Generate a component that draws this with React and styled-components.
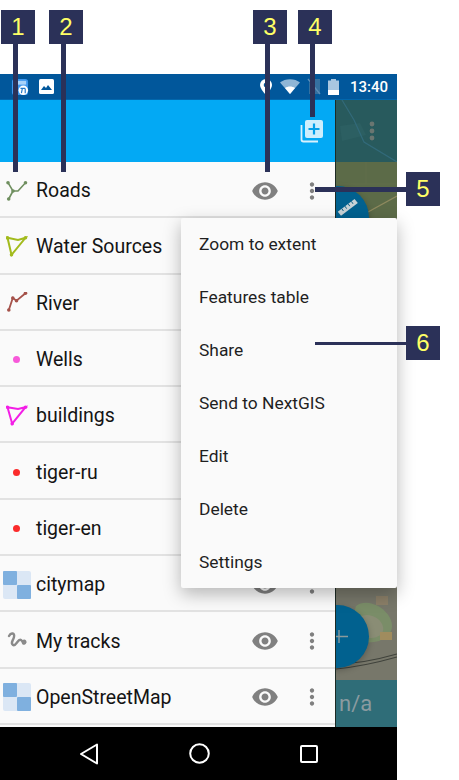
import React from 'react'
import styled, { createGlobalStyle } from 'styled-components'
import { MdVisibility, MdMoreVert } from 'react-icons/md'

const GlobalStyle = createGlobalStyle`
  html, body { margin: 0; padding: 0; background: #fff; }
  body { font-family: Roboto, "Liberation Sans", sans-serif; }
`

const layers = [
  { name: 'Roads', icon: 'roads' },
  { name: 'Water Sources', icon: 'water' },
  { name: 'River', icon: 'river' },
  { name: 'Wells', icon: 'wells' },
  { name: 'buildings', icon: 'buildings' },
  { name: 'tiger-ru', icon: 'tiger' },
  { name: 'tiger-en', icon: 'tiger' },
  { name: 'citymap', icon: 'raster' },
  { name: 'My tracks', icon: 'tracks' },
  { name: 'OpenStreetMap', icon: 'raster' },
]

const menuItems = ['Zoom to extent', 'Features table', 'Share', 'Send to NextGIS', 'Edit', 'Delete', 'Settings']

const callouts = [
  { n: 1, x: 1, y: 10 },
  { n: 2, x: 49, y: 10 },
  { n: 3, x: 253, y: 10 },
  { n: 4, x: 298, y: 10 },
  { n: 5, x: 406, y: 172 },
  { n: 6, x: 406, y: 326 },
]

const leaders = [
  { x: 13, y: 44, w: 5, h: 128 },
  { x: 61, y: 44, w: 5, h: 128 },
  { x: 265, y: 44, w: 5, h: 128 },
  { x: 310, y: 44, w: 5, h: 73 },
  { x: 315, y: 187, w: 91, h: 5 },
  { x: 315, y: 342, w: 91, h: 3 },
]

function Polyline({ points, color, width = 1.6, r = 1.8, close, nodes }) {
  const pts = points.map(p => p.join(',')).join(' ')
  const dots = nodes || points
  return (
    <svg width="22" height="22" viewBox="0 0 22 22">
      {close
        ? <polygon points={pts} fill="none" stroke={color} strokeWidth={width} />
        : <polyline points={pts} fill="none" stroke={color} strokeWidth={width} />}
      {dots.map((p, i) => <circle key={i} cx={p[0]} cy={p[1]} r={r} fill={color} />)}
    </svg>
  )
}

function RasterIcon() {
  return (
    <svg width="28" height="28" viewBox="0 0 28 28">
      <rect width="28" height="28" rx="2" fill="#dbe7f5" />
      <rect x="0" y="0" width="14" height="14" rx="1" fill="#7fb0df" />
      <rect x="14" y="14" width="14" height="14" rx="1" fill="#7fb0df" />
    </svg>
  )
}

function LayerIcon({ kind }) {
  if (kind === 'roads') {
    return (
      <Polyline
        color="#6f8f5f"
        points={[[2, 2.7], [7, 11], [2.7, 19], [7, 11], [12, 11], [19.5, 2.7]]}
        nodes={[[2, 2.7], [7, 11], [2.7, 19], [19.5, 2.7]]}
      />
    )
  }
  if (kind === 'water') {
    return <Polyline color="#a3bb1d" close width={2} points={[[1.5, 1.8], [12, 4], [19.5, 1.8], [5.5, 18.8]]} nodes={[[1.5, 1.8], [19.5, 1.8], [5.5, 18.8]]} />
  }
  if (kind === 'river') {
    return <Polyline color="#a5524a" width={1.8} points={[[2.8, 18], [6.8, 6], [10.5, 8.7], [19.5, 1.3]]} />
  }
  if (kind === 'buildings') {
    return <Polyline color="#f31ee6" close width={2} points={[[1.5, 2.2], [12, 4], [19.5, 2.2], [6.2, 18.7]]} nodes={[[1.5, 2.2], [19.5, 2.2], [6.2, 18.7]]} />
  }
  if (kind === 'wells') return <Dot $color="#f759d9" />
  if (kind === 'tiger') return <Dot $color="#fb2b2b" />
  if (kind === 'raster') return <RasterIcon />
  return (
    <svg width="22" height="22" viewBox="0 0 22 22">
      <path d="M3 6c2-4 6-3 5 1s-4 6-1 8 5-7 8-5 1 5 4 3c1-1 0-3-2-2" fill="none" stroke="#8a8a8a" strokeWidth="2.4" strokeLinecap="round" />
    </svg>
  )
}

function StatusIcons() {
  return (
    <>
      <StatusLeft>
        <svg width="18" height="18" viewBox="0 0 19 19">
          <rect x="1" y="1" width="17" height="17" rx="3" fill="#3f97ee" />
          <rect x="3" y="3" width="13" height="4" fill="#a8d2fa" />
          <circle cx="13" cy="13" r="5" fill="#fff" />
          <path d="M10 11h5M12 11l-1 5M15 11v5" stroke="#1f76c8" strokeWidth="1.2" fill="none" />
        </svg>
        <svg width="15" height="15" viewBox="0 0 15 15">
          <rect width="15" height="15" rx="1.5" fill="#fff" />
          <path d="M2 11l3-4 2 2 2-3 4 5z" fill="#01579b" />
        </svg>
      </StatusLeft>
      <StatusRight>
        <svg width="14" height="18" viewBox="0 0 14 18">
          <path d="M7 1a6 6 0 0 1 6 6c0 4-6 10-6 10S1 11 1 7a6 6 0 0 1 6-6z" fill="#fff" />
          <circle cx="7" cy="7" r="2.3" fill="#01579b" />
        </svg>
        <svg width="20" height="15" viewBox="0 0 20 15">
          <path d="M0 3.5C5-1 15-1 20 3.5L10 15z" fill="#8fb6d6" />
          <path d="M5 9c3-2 7-2 10 0l-5 6z" fill="#fff" />
        </svg>
        <svg width="14" height="17" viewBox="0 0 14 17">
          <path d="M5 1h8v15H2V5z" fill="#35709f" />
          <path d="M1 1l12 15" stroke="#5c8db8" strokeWidth="1.3" />
        </svg>
        <svg width="11" height="16" viewBox="0 0 11 16">
          <rect x="3" y="0" width="5" height="2" fill="#a9c7e0" />
          <rect x="0" y="1.5" width="11" height="14.5" fill="#a9c7e0" />
          <rect x="0" y="11" width="11" height="5" fill="#fff" />
        </svg>
        <Clock>13:40</Clock>
      </StatusRight>
    </>
  )
}

function AddLayerIcon() {
  return (
    <svg width="24" height="24" viewBox="0 0 24 24">
      <path d="M1.5 6v14.5a2 2 0 0 0 2 2H18" fill="none" stroke="#d8f1fd" strokeWidth="1.8" />
      <rect x="5" y="1" width="18" height="18" rx="2" fill="#cdeefd" />
      <path d="M14 4.5v11M8.5 10h11" stroke="#049fe8" strokeWidth="2.2" />
    </svg>
  )
}

function NavBack() {
  return (
    <svg width="20" height="22" viewBox="0 0 20 22">
      <path d="M18 1.5v19L2 11z" fill="none" stroke="#fff" strokeWidth="2" strokeLinejoin="round" />
    </svg>
  )
}

function NavHome() {
  return (
    <svg width="21" height="21" viewBox="0 0 21 21">
      <circle cx="10.5" cy="10.5" r="9.3" fill="none" stroke="#fff" strokeWidth="2" />
    </svg>
  )
}

function NavRecent() {
  return (
    <svg width="18" height="18" viewBox="0 0 18 18">
      <rect x="1" y="1" width="16" height="16" rx="1" fill="none" stroke="#fff" strokeWidth="2" />
    </svg>
  )
}

export default function App() {
  return (
    <Page>
      <GlobalStyle />
      <Phone>
        <StatusBar><StatusIcons /></StatusBar>
        <Body>
          <Drawer>
            <AppBar><AddLayerIcon /></AppBar>
            <List>
              {layers.map(l => (
                <Row key={l.name}>
                  <IconSlot><LayerIcon kind={l.icon} /></IconSlot>
                  <Name>{l.name}</Name>
                  <Eye><MdVisibility size={28} /></Eye>
                  <More><MdMoreVert size={26} /></More>
                </Row>
              ))}
            </List>
          </Drawer>
          <MapPane>
            <MapTile $bg="#285a5d" $h={62}>
              <svg width="61" height="62" viewBox="0 0 61 62">
                <path d="M4 26l20-3 6 12-24 6z" fill="#2c5f62" />
                <path d="M6 0l12 20 10 22 33 20" fill="none" stroke="#326a7a" strokeWidth="1.2" />
                <circle cx="36" cy="24" r="2.4" fill="#6a7671" />
                <circle cx="36" cy="31" r="2.4" fill="#6a7671" />
                <circle cx="36" cy="38" r="2.4" fill="#6a7671" />
              </svg>
            </MapTile>
            <MapTile $bg="#5c6b48" $h={56}>
              <svg width="61" height="56" viewBox="0 0 61 56">
                <path d="M32 50l29-16" fill="none" stroke="#8f8a5f" strokeWidth="1.4" />
                <path d="M30 0v22M0 22h61" fill="none" stroke="#606e4b" strokeWidth="1" />
              </svg>
            </MapTile>
            <MapTile $bg="#6d6f62" $h={370} />
            <MapTile $bg="#77776a" $h={92}>
              <svg width="61" height="92" viewBox="0 0 61 92">
                <path d="M20 18c10-8 28 0 34 12s-2 22-16 24-24-4-24-14z" fill="#7a8d68" />
                <path d="M22 30c8-6 20-2 24 6s-2 14-12 14-14-4-14-10z" fill="#8a8d75" />
                <path d="M0 76c20 0 40-4 61-10M0 81c20-2 40-6 61-12" fill="none" stroke="#3f423b" strokeWidth="1.2" />
                <rect x="40" y="8" width="12" height="9" fill="#8b7f68" />
                <rect x="44" y="44" width="12" height="8" fill="#a08c5e" />
              </svg>
            </MapTile>
            <NaTile>n/a</NaTile>
            <Fab $top={86} />
            <Fab $top={505}>
              <svg width="13" height="13" viewBox="0 0 13 13">
                <path d="M0 6.5h13M4 0v13" stroke="#8a9a9c" strokeWidth="1.4" />
              </svg>
            </Fab>
            <Ruler>
              <svg width="24" height="22" viewBox="0 0 30 24">
                <path d="M1 18L22 2l4 5L5 23z" fill="#c7d2d6" />
                <path d="M6 14l2 3M10 11l2 3M14 8l2 3M18 5l2 3" stroke="#01597f" strokeWidth="1.2" />
              </svg>
            </Ruler>
          </MapPane>
          <PopupMenu>
            {menuItems.map(m => <MenuItem key={m}>{m}</MenuItem>)}
          </PopupMenu>
        </Body>
        <NavBar>
          <NavBack />
          <NavHome />
          <NavRecent />
        </NavBar>
      </Phone>
      {leaders.map((l, i) => <Leader key={i} $x={l.x} $y={l.y} $w={l.w} $h={l.h} />)}
      {callouts.map(c => <Callout key={c.n} $x={c.x} $y={c.y}>{c.n}</Callout>)}
    </Page>
  )
}

const Page = styled.div`
  position: relative;
  width: 459px;
  height: 780px;
  padding-top: 74px;
  box-sizing: border-box;
  overflow: hidden;
  background: #fff;
`
const Phone = styled.div`
  width: 397px;
  height: 706px;
  display: flex;
  flex-direction: column;
`
const StatusBar = styled.div`
  height: 26px;
  flex: none;
  background: #01579b;
  border-bottom: 1px solid #0267ad;
  box-sizing: border-box;
  display: flex;
  align-items: center;
  justify-content: space-between;
  padding: 0 9px 0 11px;
`
const StatusLeft = styled.div`
  display: flex;
  align-items: center;
  gap: 10px;
`
const StatusRight = styled.div`
  display: flex;
  align-items: center;
  gap: 7px;
`
const Clock = styled.span`
  color: #fff;
  font-size: 15px;
  font-weight: 500;
  margin-left: 4px;
`
const Body = styled.div`
  position: relative;
  flex: 1;
  display: flex;
  min-height: 0;
`
const Drawer = styled.div`
  width: 336px;
  flex: none;
  box-sizing: border-box;
  display: flex;
  flex-direction: column;
  background: #fafafa;
  border-right: 1px solid #1c2a24;
`
const AppBar = styled.div`
  height: 62px;
  flex: none;
  background: #03a9f4;
  display: flex;
  align-items: center;
  justify-content: flex-end;
  padding: 0 11px 0 0;
  box-sizing: border-box;
`
const List = styled.div`
  flex: 1;
  overflow: hidden;
`
const Row = styled.div`
  height: 56.3px;
  box-sizing: border-box;
  display: flex;
  align-items: center;
  border-bottom: 2px solid #e2e2e2;
  padding: 3px 10px 0 0;
`
const IconSlot = styled.div`
  width: 33px;
  margin-right: 3px;
  flex: none;
  display: flex;
  justify-content: center;
  svg { display: block; }
`
const Dot = styled.span`
  display: block;
  width: 7px;
  height: 7px;
  border-radius: 50%;
  background: ${p => p.$color};
`
const Name = styled.div`
  flex: 1;
  font-size: 19.5px;
  color: #141414;
`
const Eye = styled.div`
  display: flex;
  color: #808080;
  margin-right: 20px;
`
const More = styled.div`
  display: flex;
  color: #808080;
`
const MapPane = styled.div`
  position: relative;
  flex: 1;
  display: flex;
  flex-direction: column;
  overflow: hidden;
`
const MapTile = styled.div`
  height: ${p => p.$h}px;
  flex: none;
  background: ${p => p.$bg};
  svg { display: block; }
`
const NaTile = styled.div`
  flex: 1;
  background: #2f6d78;
  color: #8a9ba0;
  font-size: 22px;
  display: flex;
  align-items: center;
  padding-left: 3px;
`
const Fab = styled.div`
  position: absolute;
  left: -30px;
  top: ${p => p.$top}px;
  width: 63px;
  height: 63px;
  border-radius: 50%;
  background: #01618f;
  box-shadow: 0 2px 6px rgba(0, 0, 0, 0.25);
  display: flex;
  align-items: center;
  justify-content: flex-end;
  svg { margin-right: 21px; }
`
const Ruler = styled.div`
  position: absolute;
  left: 1px;
  top: 96px;
`
const PopupMenu = styled.div`
  position: absolute;
  left: 181px;
  top: 118px;
  width: 216px;
  height: 370px;
  background: #fafafa;
  box-shadow: 0 6px 18px rgba(0, 0, 0, 0.28);
  border-radius: 2px;
  display: flex;
  flex-direction: column;
  padding-left: 18px;
  box-sizing: border-box;
`
const MenuItem = styled.div`
  height: 53px;
  flex: none;
  box-sizing: border-box;
  padding-bottom: 2px;
  display: flex;
  align-items: center;
  font-size: 17.4px;
  color: #1f1f1f;
`
const NavBar = styled.div`
  height: 53px;
  flex: none;
  background: #000;
  display: flex;
  align-items: center;
  padding: 0 79px;
  justify-content: space-between;
`
const Callout = styled.div`
  position: absolute;
  left: ${p => p.$x}px;
  top: ${p => p.$y}px;
  width: 34px;
  height: 34px;
  background: #2b3158;
  color: #ffff66;
  font-family: "Liberation Sans", sans-serif;
  font-size: 24px;
  display: flex;
  align-items: center;
  justify-content: center;
`
const Leader = styled.div`
  position: absolute;
  left: ${p => p.$x}px;
  top: ${p => p.$y}px;
  width: ${p => p.$w}px;
  height: ${p => p.$h}px;
  background: #2b3158;
`
